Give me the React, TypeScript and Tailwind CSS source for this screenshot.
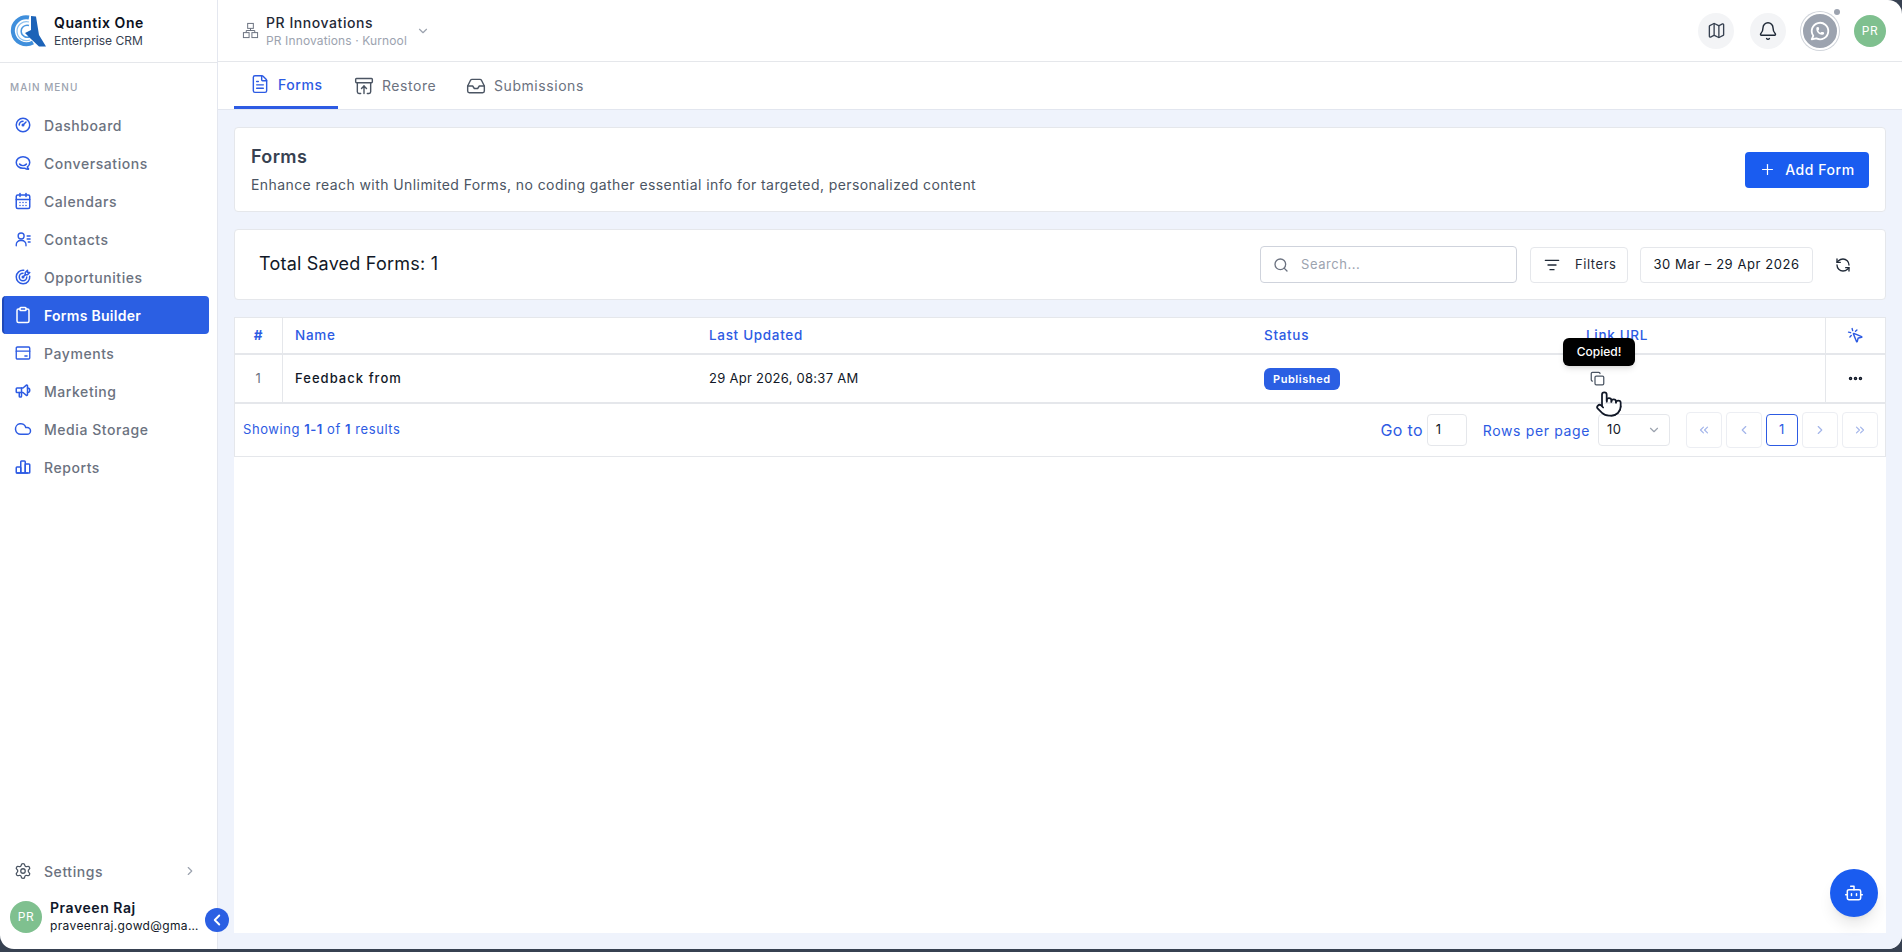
import { Bell, Bot, CalendarDays, ChevronDown, ChevronLeft, ChevronRight, ChevronsLeft, ChevronsRight, Clipboard, Cloud, Copy, Ellipsis, FileText, ArchiveRestore, Inbox, ListFilter, Map, MousePointerClick, Plus, Pointer, RefreshCcw, Search, Settings } from 'lucide-react'
import { TbBrandHipchat, TbBrandWhatsapp, TbChartBar, TbGauge, TbSpeakerphone, TbTargetArrow } from 'react-icons/tb'

function ContactsIcon({ className }: { className?: string }) {
  return (
    <svg viewBox="0 0 24 24" fill="none" stroke="currentColor" strokeWidth="1.8" strokeLinecap="round" className={className}>
      <circle cx="9.500" cy="8" r="4" />
      <path d="M3 21v-1.500a5.500 5.500 0 0 1 5.500-5.500h2a5.500 5.500 0 0 1 5.500 5.500V21" />
      <path d="M17.500 8h4M17.500 12h4M19 16h2.500" />
    </svg>
  )
}

function PaymentsIcon({ className }: { className?: string }) {
  return (
    <svg viewBox="0 0 24 24" fill="none" stroke="currentColor" strokeWidth="1.8" strokeLinecap="round" className={className}>
      <rect x="3" y="4" width="18" height="16" rx="1.500" />
      <path d="M3 9.500h18M14.500 16h3" />
    </svg>
  )
}

function OrgIcon({ className }: { className?: string }) {
  return (
    <svg viewBox="0 0 24 24" fill="none" stroke="currentColor" strokeWidth="1.4" className={className}>
      <rect x="8" y="2" width="8" height="7" />
      <rect x="2" y="15" width="8" height="7" />
      <rect x="14" y="15" width="8" height="7" />
      <path d="M12 9v3M6 15v-3h12v3" />
    </svg>
  )
}

function Logo() {
  return (
    <svg viewBox="0 0 36 32" className="w-9 h-8 shrink-0">
      <path d="M19 2.500a13.500 13.500 0 1 0 4 25" fill="none" stroke="#3f8fdc" strokeWidth="4" />
      <path d="M19 7a9.500 9.500 0 1 0 1 18" fill="none" stroke="#8cc0ee" strokeWidth="1.200" />
      <path d="M19 10.500a6 6 0 1 0 1 11" fill="none" stroke="#4a97e0" strokeWidth="1.500" />
      <path d="M21 1 L26 1.500 L29 20 L36 31.500 L29 31.500 L21 24 L15 18 L21 15 Z" fill="#1c63b8" />
    </svg>
  )
}

const menu = [
  { icon: TbGauge, label: 'Dashboard' },
  { icon: TbBrandHipchat, label: 'Conversations' },
  { icon: CalendarDays, label: 'Calendars' },
  { icon: ContactsIcon, label: 'Contacts' },
  { icon: TbTargetArrow, label: 'Opportunities' },
  { icon: Clipboard, label: 'Forms Builder', active: true },
  { icon: PaymentsIcon, label: 'Payments' },
  { icon: TbSpeakerphone, label: 'Marketing' },
  { icon: Cloud, label: 'Media Storage' },
  { icon: TbChartBar, label: 'Reports' },
]

const tabs = [
  { icon: FileText, label: 'Forms', active: true, cls: 'w-[104px] pl-[16px]' },
  { icon: ArchiveRestore, label: 'Restore', cls: 'w-[118px] pl-[16px]' },
  { icon: Inbox, label: 'Submissions', cls: 'pl-[10px] pr-4' },
]

const cols = 'grid grid-cols-[48px_414px_555px_321px_252px_60px]'

function PageBtn({ children, current }: { children: React.ReactNode; current?: boolean }) {
  return (
    <div className={current
      ? 'w-[32px] h-[32px] flex items-center justify-center rounded border border-[#2d5be3] text-[#2d5be3] text-[13px]'
      : 'w-[36px] h-[36px] flex items-center justify-center rounded border border-[#eceef3] text-[#a3b5ea]'}>
      {children}
    </div>
  )
}

export default function App() {
  return (
    <div className="h-screen bg-[#374151] font-['Inter',sans-serif] tracking-[0.035em] text-[#111827]">
      <div className="h-[949px] flex bg-white rounded-b-[14px] rounded-tr-[14px] overflow-hidden">
        <aside className="w-[218px] shrink-0 flex flex-col border-r border-[#e4e7ef] relative">
          <div className="h-[63px] shrink-0 flex items-center gap-2 pl-[10px] border-b border-[#e5e7eb]">
            <Logo />
            <div>
              <div className="text-[14px] leading-[18px] font-semibold text-[#0b1020]">Quantix One</div>
              <div className="text-[12px] leading-[17px] tracking-normal text-[#374151]">Enterprise CRM</div>
            </div>
          </div>
          <div className="pl-[10px] pt-[17px] text-[10px] leading-[14px] font-medium tracking-[0.1em] text-[#9ca3af]">MAIN MENU</div>
          <nav className="mt-[12px] flex flex-col pl-[2px] pr-2">
            {menu.map(item => (
              <div
                key={item.label}
                className={item.active
                  ? 'h-[38px] flex items-center gap-[12px] pl-[10px] rounded bg-[#2b5fe3] border-l-2 border-[#1f48b8] text-white text-[14px] font-semibold tracking-[0.02em]'
                  : 'h-[38px] flex items-center gap-[12px] pl-[12px] text-[14px] font-medium text-[#6b7280]'}
              >
                <item.icon className={item.active ? 'w-[18px] h-[18px] text-white' : 'w-[18px] h-[18px] text-[#2d5be3]'} />
                {item.label}
              </div>
            ))}
          </nav>
          <div className="mt-auto h-[38px] flex items-center gap-[12px] pl-[14px] pr-[20px] text-[14px] font-medium text-[#6b7280]">
            <Settings className="w-[18px] h-[18px] text-[#4b5563]" strokeWidth={1.7} />
            Settings
            <ChevronRight className="w-[14px] h-[14px] ml-auto text-[#9ca3af]" />
          </div>
          <div className="h-[48px] mb-[8px] mt-[3px] flex items-center gap-2 pl-[10px] pr-[8px]">
            <div className="w-[32px] h-[32px] shrink-0 rounded-full bg-[#7fc08f] text-white text-[12px] flex items-center justify-center">PR</div>
            <div className="min-w-0">
              <div className="text-[14px] leading-[18px] font-semibold text-[#0f172a]">Praveen Raj</div>
              <div className="text-[12px] leading-[18px] tracking-[0.03em] text-[#111827] whitespace-nowrap">praveenraj.gowd@gma…</div>
            </div>
          </div>
          <button className="absolute right-[-12px] bottom-[17px] w-[24px] h-[24px] rounded-full bg-[#2b5fe3] text-white flex items-center justify-center z-10">
            <ChevronLeft className="w-[18px] h-[18px]" strokeWidth={2.5} />
          </button>
        </aside>

        <div className="flex-1 min-w-0 flex flex-col">
          <header className="h-[62px] shrink-0 flex items-center border-b border-[#e5e7eb] pl-[24px] pr-[16px]">
            <OrgIcon className="w-[17px] h-[17px] text-[#6b7280]" />
            <div className="ml-[7px]">
              <div className="text-[14px] leading-[20px] font-medium text-[#1f2937]">PR Innovations</div>
              <div className="text-[12px] leading-[16px] tracking-[0.01em] text-[#9ca3af]">PR Innovations · Kurnool</div>
            </div>
            <ChevronDown className="w-[14px] h-[14px] ml-[9px] text-[#9ca3af]" />
            <div className="ml-auto flex items-center">
              <div className="w-[36px] h-[36px] rounded-full bg-[#f3f4f6] flex items-center justify-center">
                <Map className="w-[19px] h-[19px] text-[#374151]" strokeWidth={1.7} />
              </div>
              <div className="w-[36px] h-[36px] ml-[16px] rounded-full bg-[#f3f4f6] flex items-center justify-center">
                <Bell className="w-[20px] h-[20px] text-[#1f2937]" strokeWidth={1.7} />
              </div>
              <div className="relative w-[38px] h-[38px] ml-[15px] rounded-full bg-[#9ca3af] border-2 border-white ring-1 ring-[#d1d5db] flex items-center justify-center">
                <TbBrandWhatsapp className="w-[22px] h-[22px] text-white" />
                <span className="absolute top-[-5px] right-[-3px] w-[6px] h-[6px] rounded-full bg-[#9ca3af]" />
              </div>
              <div className="w-[32px] h-[32px] ml-[15px] rounded-full bg-[#7fc08f] text-white text-[12px] flex items-center justify-center">PR</div>
            </div>
          </header>

          <div className="h-[48px] shrink-0 flex pl-[16px] border-b border-[#e2e6ef]">
            {tabs.map(tab => (
              <div
                key={tab.label}
                className={`${tab.cls} flex items-center gap-[8px] text-[14px] ${tab.active ? 'border-b-[3px] border-[#2d5be3] text-[#2d5be3] font-medium' : 'text-[#6b7280]'}`}
              >
                <tab.icon className={tab.active ? 'w-[20px] h-[20px] text-[#2d5be3]' : 'w-[20px] h-[20px] text-[#4b5563]'} strokeWidth={1.7} />
                {tab.label}
              </div>
            ))}
          </div>

          <main className="flex-1 min-h-0 bg-[#eff3fc] px-[16px] pt-[17px] pb-[16px] flex flex-col gap-[17px]">
            <section className="h-[85px] shrink-0 bg-white border border-[#e5e7eb] rounded flex items-center justify-between pl-[16px] pr-[16px]">
              <div>
                <h1 className="text-[18px] leading-[26px] font-semibold tracking-[0.02em] text-[#374151]">Forms</h1>
                <p className="mt-[5px] text-[14px] leading-[20px] tracking-[0.03em] text-[#4b5563]">Enhance reach with Unlimited Forms, no coding gather essential info for targeted, personalized content</p>
              </div>
              <button className="w-[124px] h-[36px] rounded bg-[#1a5cf0] text-white text-[14px] font-medium flex items-center justify-center gap-[9px]">
                <Plus className="w-[17px] h-[17px]" strokeWidth={1.7} />
                Add Form
              </button>
            </section>

            <section className="h-[71px] shrink-0 bg-white border border-[#e5e7eb] rounded flex items-center pl-[24px] pr-[24px]">
              <h2 className="pb-[2px] text-[18px] tracking-[0.012em] text-[#111827]">Total Saved Forms: 1</h2>
              <div className="ml-auto flex items-center">
                <div className="w-[257px] h-[37px] rounded border border-[#cfd3dc] flex items-center gap-[12px] pl-[12px] text-[13px] text-[#9ca3af]">
                  <Search className="w-[16px] h-[16px] text-[#6b7280]" />
                  Search...
                </div>
                <div className="w-[98px] h-[36px] ml-[13px] rounded border border-[#e5e7eb] flex items-center gap-[15px] pl-[13px] text-[13px] text-[#1f2937]">
                  <ListFilter className="w-[16px] h-[16px]" />
                  Filters
                </div>
                <div className="w-[173px] h-[36px] ml-[12px] rounded border border-[#e5e7eb] flex items-center justify-center text-[13px] text-[#111827] whitespace-nowrap">
                  30 Mar – 29 Apr 2026
                </div>
                <RefreshCcw className="w-[16px] h-[16px] ml-[22px] mr-[10px] text-[#1f2937]" />
              </div>
            </section>

            <section className="flex-1 min-h-0 bg-white">
              <div className="border border-[#e5e7eb] relative">
                <div className={`${cols} h-[37px] items-center text-[13.5px] font-medium tracking-[0.05em] text-[#2d5be3] border-b-2 border-[#e5e7eb]`}>
                  <div className="h-full flex items-center justify-center border-r border-[#e5e7eb] font-bold">#</div>
                  <div className="pl-[12px]">Name</div>
                  <div className="pl-[12px]">Last Updated</div>
                  <div className="pl-[12px]">Status</div>
                  <div className="pl-[13px]">Link URL</div>
                  <div className="h-full flex items-center justify-center border-l border-[#e5e7eb]">
                    <MousePointerClick className="w-[17px] h-[17px]" />
                  </div>
                </div>
                <div className={`${cols} h-[49px] items-center text-[13px] text-[#111827] border-b-2 border-[#e5e7eb]`}>
                  <div className="h-full flex items-center justify-center border-r border-[#e5e7eb] text-[#6b7280]">1</div>
                  <div className="pl-[12px] font-medium tracking-[0.08em]">Feedback from</div>
                  <div className="pl-[12px] tracking-[0.02em]">29 Apr 2026, 08:37 AM</div>
                  <div className="pl-[12px]">
                    <span className="inline-block px-[9px] py-[3px] rounded-md bg-[#2b5fe3] text-white text-[11px] leading-[16px] font-semibold">Published</span>
                  </div>
                  <div className="pl-[17px]">
                    <Copy className="w-[15px] h-[15px] text-[#4b5563]" />
                  </div>
                  <div className="h-full flex items-center justify-center border-l border-[#e5e7eb]">
                    <Ellipsis className="w-[17px] h-[17px] text-[#111827]" strokeWidth={3} />
                  </div>
                </div>
                <div className="h-[52px] flex items-center pl-[8px] pr-[7px] text-[13px] text-[#2d5be3]">
                  <span>Showing <b className="font-semibold">1-1</b> of <b className="font-semibold">1</b> results</span>
                  <div className="ml-auto flex items-center">
                    <span className="text-[16px] tracking-[0.02em]">Go to</span>
                    <div className="w-[40px] h-[32px] ml-[4px] pl-[8px] rounded border border-[#e5e7eb] flex items-center text-[#111827]">1</div>
                    <span className="ml-[16px] text-[14px] tracking-[0.045em]">Rows per page</span>
                    <div className="w-[72px] h-[32px] ml-[8px] px-[8px] rounded border border-[#e5e7eb] flex items-center justify-between text-[#111827]">
                      10
                      <ChevronDown className="w-[14px] h-[14px] text-[#9ca3af]" />
                    </div>
                    <div className="ml-[16px] flex items-center gap-[4px]">
                      <PageBtn><ChevronsLeft className="w-[14px] h-[14px]" /></PageBtn>
                      <PageBtn><ChevronLeft className="w-[14px] h-[14px]" /></PageBtn>
                      <PageBtn current>1</PageBtn>
                      <PageBtn><ChevronRight className="w-[14px] h-[14px]" /></PageBtn>
                      <PageBtn><ChevronsRight className="w-[14px] h-[14px]" /></PageBtn>
                    </div>
                  </div>
                </div>
                <div className="absolute left-[1328px] top-[20px] w-[72px] h-[28px] rounded-md bg-black text-white text-[12px] tracking-normal font-medium flex items-center justify-center shadow-md">Copied!</div>
                <Pointer className="absolute left-[1360px] top-[71px] w-[28px] h-[30px] text-[#111827] fill-white" strokeWidth={1.5} />
              </div>
            </section>
          </main>
        </div>
      </div>
      <button className="fixed left-[1830px] top-[869px] w-[48px] h-[48px] rounded-full bg-[#1a5cf0] text-white flex items-center justify-center shadow-lg">
        <Bot className="w-[20px] h-[20px]" strokeWidth={1.8} />
      </button>
    </div>
  )
}
